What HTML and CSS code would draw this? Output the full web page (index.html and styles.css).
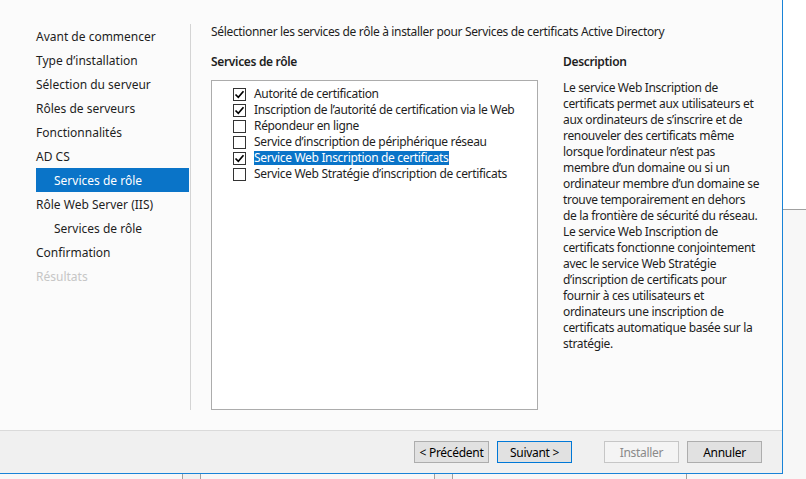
FILE: index.html
```html
<!DOCTYPE html>
<html lang="fr">
  <head>
    <meta charset="UTF-8" />
    <title>Assistant Ajout de rôles et de fonctionnalités</title>
    <link rel="stylesheet" href="styles.css">
  </head>
  <body>
    <div class="screen">
      <div class="wizard">
        <div class="main">
          <nav class="steps">
            <div class="step">Avant de commencer</div>
            <div class="step">Type d’installation</div>
            <div class="step">Sélection du serveur</div>
            <div class="step">Rôles de serveurs</div>
            <div class="step">Fonctionnalités</div>
            <div class="step">AD CS</div>
            <div class="step sub active">Services de rôle</div>
            <div class="step">Rôle Web Server (IIS)</div>
            <div class="step sub">Services de rôle</div>
            <div class="step">Confirmation</div>
            <div class="step disabled">Résultats</div>
          </nav>

          <div class="content">
            <p class="intro">Sélectionner les services de rôle à installer pour Services de certificats Active Directory</p>
            <div class="columns">
              <div class="services">
                <h3>Services de rôle</h3>
                <div class="listbox">
                  <div class="item"><span class="check on"></span><span class="label">Autorité de certification</span></div>
                  <div class="item"><span class="check on"></span><span class="label">Inscription de l’autorité de certification via le Web</span></div>
                  <div class="item"><span class="check"></span><span class="label">Répondeur en ligne</span></div>
                  <div class="item"><span class="check"></span><span class="label">Service d’inscription de périphérique réseau</span></div>
                  <div class="item"><span class="check on"></span><span class="label selected">Service Web Inscription de certificats</span></div>
                  <div class="item"><span class="check"></span><span class="label">Service Web Stratégie d’inscription de certificats</span></div>
                </div>
              </div>
              <div class="description">
                <h3>Description</h3>
                <p>
                  Le service Web Inscription de<br>
                  certificats permet aux utilisateurs et<br>
                  aux ordinateurs de s’inscrire et de<br>
                  renouveler des certificats même<br>
                  lorsque l’ordinateur n’est pas<br>
                  membre d’un domaine ou si un<br>
                  ordinateur membre d’un domaine se<br>
                  trouve temporairement en dehors<br>
                  de la frontière de sécurité du réseau.<br>
                  Le service Web Inscription de<br>
                  certificats fonctionne conjointement<br>
                  avec le service Web Stratégie<br>
                  d’inscription de certificats pour<br>
                  fournir à ces utilisateurs et<br>
                  ordinateurs une inscription de<br>
                  certificats automatique basée sur la<br>
                  stratégie.
                </p>
              </div>
            </div>
          </div>
        </div>

        <div class="footer">
          <button class="btn">&lt; Précédent</button>
          <button class="btn default">Suivant &gt;</button>
          <button class="btn gap" disabled>Installer</button>
          <button class="btn">Annuler</button>
        </div>
      </div>
      <div class="behind">
        <div class="behind-top"></div>
        <div class="behind-bottom"></div>
      </div>
    </div>
    <div class="strip">
      <div class="cell" style="width: 183px"></div>
      <div class="cell dark" style="width: 18px"></div>
      <div class="cell" style="width: 234px"></div>
      <div class="cell dark" style="width: 18px"></div>
      <div class="cell" style="width: 234px"></div>
      <div class="cell last"></div>
    </div>
  </body>
</html>
```

FILE: styles.css
```css
* {
  box-sizing: border-box;
}
body {
  margin: 0;
  width: 806px;
  height: 479px;
  overflow: hidden;
  background: #f7f7f7;
  font-family: "Noto Sans", "Open Sans", sans-serif;
  font-size: 12px;
  color: #1e1e1e;
}
p, h3 {
  margin: 0;
}
.screen {
  display: flex;
  height: 474px;
}
.wizard {
  width: 783px;
  display: flex;
  flex-direction: column;
  border-right: 1px solid #1883d7;
  border-bottom: 1px solid #1883d7;
}
.main {
  height: 431px;
  display: flex;
  background: #fbfbfb;
  border-bottom: 1px solid #dadada;
}

/* left step list */
.steps {
  margin-top: 24px;
  height: 386px;
  width: 191px;
  padding: 0 0 0 36px;
  border-right: 1px solid #d4d4d4;
}
.step {
  height: 24px;
  line-height: 23px;
  padding-top: 1px;
  width: 153px;
  white-space: nowrap;
}
.step.sub {
  padding-left: 18px;
}
.step.active {
  background: #0a74c8;
  color: #fff;
}
.step.disabled {
  color: #c6c6c6;
}

/* content */
.content {
  padding: 24px 0 0 20px;
  flex: 1;
  letter-spacing: -0.33px;
}
.intro {
  line-height: 16px;
  white-space: nowrap;
}
h3 {
  font-size: 12px;
  font-weight: 600;
  line-height: 16px;
  margin-bottom: 10px;
}
.columns {
  display: flex;
  margin-top: 14px;
}
.listbox {
  width: 327px;
  height: 330px;
  background: #fff;
  border: 1px solid #acacac;
  padding: 5px 0 0 21px;
}
.item {
  display: flex;
  align-items: center;
  height: 16px;
  white-space: nowrap;
}
.check {
  width: 13px;
  height: 13px;
  border: 1px solid #333;
  background: #fff;
  margin-right: 8px;
  flex: none;
}
.check.on {
  background: #fff url("data:image/svg+xml;utf8,<svg xmlns='http://www.w3.org/2000/svg' width='11' height='11'><polyline points='1.5,5.5 4.3,8.3 9.5,2.2' fill='none' stroke='%23000' stroke-width='1.7'/></svg>") no-repeat center;
}
.label {
  line-height: 14px;
  padding: 0 1px 0 0;
}
.label.selected {
  background: #0a74c8;
  color: #fff;
}
.description {
  margin-left: 25px;
}
.description h3 {
  margin-bottom: 9px;
}
.description p {
  padding-top: 1px;
  line-height: 16px;
  white-space: nowrap;
}

/* buttons */
.footer {
  flex: 1;
  background: #f0f0f0;
  display: flex;
  justify-content: flex-end;
  align-items: flex-start;
  padding: 10px 20px 0 0;
  gap: 8px;
}
.btn {
  width: 75px;
  height: 22px;
  padding: 0;
  font: inherit;
  letter-spacing: -0.3px;
  color: #000;
  background: #e1e1e1;
  border: 1px solid #adadad;
}
.btn.default {
  border-color: #0078d7;
}
.btn.gap {
  margin-left: 24px;
}
.btn:disabled {
  background: #f4f4f4;
  border-color: #c6c6c6;
  color: #8a8a8a;
}

/* windows behind the dialog */
.behind {
  flex: 1;
  display: flex;
  flex-direction: column;
}
.behind-top {
  height: 210px;
  background: #fff;
  border-bottom: 1px solid #a0a0a0;
}
.behind-bottom {
  flex: 1;
  background: #f7f7f7;
}
.strip {
  display: flex;
  height: 5px;
}
.cell {
  border-right: 1px solid #a0a0a0;
}
.cell.dark {
  background: #f0f0f0;
}
.cell.last {
  border-right: none;
  flex: 1;
}
```
